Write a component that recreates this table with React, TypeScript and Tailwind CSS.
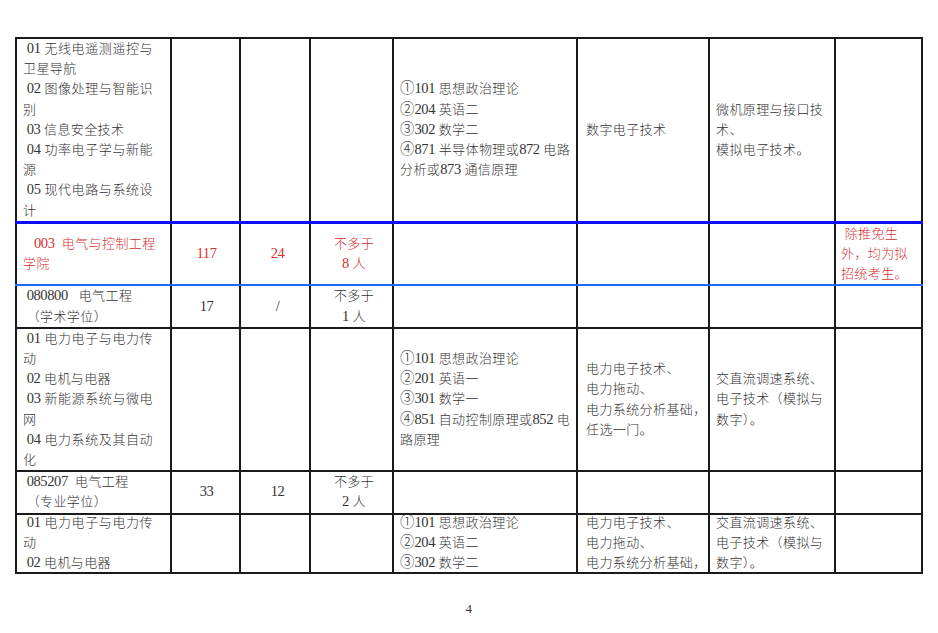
import React from "react";

type Cell = { lines?: string[]; j?: number[] };
type Row = { h: string; red?: boolean; b: string; last?: boolean; cells: Cell[] };

const colCls = [
  "pl-[6px] pr-[17px] text-left",
  "text-center pl-[2px]",
  "text-center pl-[5px]",
  "text-center pl-[5px]",
  "pl-[6px] pr-[7px] text-left",
  "pl-[8px] text-left",
  "pl-[6px] text-left",
  "pl-[5px] text-left",
];

const E: Cell = {};

const rows: Row[] = [
  {
    h: "h-[183.5px]",
    b: "border-b-[3px] border-b-[#0d0df0]",
    cells: [
      {
        lines: [
          " 01 无线电遥测遥控与",
          "卫星导航",
          " 02 图像处理与智能识",
          "别",
          " 03 信息安全技术",
          " 04 功率电子学与新能",
          "源",
          " 05 现代电路与系统设",
          "计",
        ],
        j: [0, 2, 5, 7],
      },
      E,
      E,
      E,
      {
        lines: [
          "①101 思想政治理论",
          "②204 英语二",
          "③302 数学二",
          "④871 半导体物理或872 电路",
          "分析或873 通信原理",
        ],
        j: [3],
      },
      { lines: ["数字电子技术"] },
      { lines: ["微机原理与接口技", "术、", "模拟电子技术。"] },
      E,
    ],
  },
  {
    h: "h-[61.5px]",
    red: true,
    b: "border-t-[3px] border-t-[#0d0df0] border-b-2 border-b-[#1e6cf5]",
    cells: [
      { lines: ["   003  电气与控制工程", "学院"] },
      { lines: ["117"] },
      { lines: ["24"] },
      { lines: ["不多于", "8 人"] },
      E,
      E,
      E,
      { lines: [" 除推免生", "外，均为拟", "招统考生。"] },
    ],
  },
  {
    h: "h-[40.5px]",
    b: "border-t-2 border-t-[#1e6cf5]",
    cells: [
      { lines: [" 080800   电气工程", " （学术学位）"] },
      { lines: ["17"] },
      { lines: ["/"] },
      { lines: ["不多于", "1 人"] },
      E,
      E,
      E,
      E,
    ],
  },
  {
    h: "h-[141px]",
    b: "",
    cells: [
      {
        lines: [
          " 01 电力电子与电力传",
          "动",
          " 02 电机与电器",
          " 03 新能源系统与微电",
          "网",
          " 04 电力系统及其自动",
          "化",
        ],
        j: [0, 3, 5],
      },
      E,
      E,
      E,
      {
        lines: [
          "①101 思想政治理论",
          "②201 英语一",
          "③301 数学一",
          "④851 自动控制原理或852 电",
          "路原理",
        ],
        j: [3],
      },
      { lines: ["电力电子技术、", "电力拖动、", "电力系统分析基础，", "任选一门。"] },
      { lines: ["交直流调速系统、", "电子技术（模拟与", "数字）。"] },
      E,
    ],
  },
  {
    h: "h-[40px]",
    b: "",
    cells: [
      { lines: [" 085207  电气工程", " （专业学位）"] },
      { lines: ["33"] },
      { lines: ["12"] },
      { lines: ["不多于", "2 人"] },
      E,
      E,
      E,
      E,
    ],
  },
  {
    h: "h-[59px]",
    b: "",
    last: true,
    cells: [
      { lines: [" 01 电力电子与电力传", "动", " 02 电机与电器"], j: [0] },
      E,
      E,
      E,
      { lines: ["①101 思想政治理论", "②204 英语二", "③302 数学二"] },
      { lines: ["电力电子技术、", "电力拖动、", "电力系统分析基础，"] },
      { lines: ["交直流调速系统、", "电子技术（模拟与", "数字）。"] },
      E,
    ],
  },
];

function Txt({ s }: { s: string }) {
  const parts = s.replace(/ /g, "\u00a0").split(/([0-9/]+|[\u2460-\u2473])/);
  return (
    <>
      {parts.map((p, i) => {
        if (i % 2 === 1) {
          if (/[\u2460-\u2473]/.test(p)) {
            return (
              <span
                key={i}
                className="font-['Noto_Sans_CJK_SC',sans-serif] text-[14.5px] leading-none tracking-[0px]"
              >
                {p}
              </span>
            );
          }
          return (
            <span key={i} className="text-[14.5px] leading-none tracking-[-0.4px]">
              {p}
            </span>
          );
        }
        return <span key={i}>{p}</span>;
      })}
    </>
  );
}

function Lines({ c, last }: { c: Cell; last?: boolean }) {
  if (!c.lines) return null;
  const j = c.j || [];
  return (
    <div className={last ? "-mt-[2px] -mb-[1px]" : ""}>
      {c.lines.map((l, i) => (
        <div
          key={i}
          className={
            j.includes(i)
              ? "whitespace-nowrap text-justify [text-align-last:justify]"
              : "whitespace-nowrap"
          }
        >
          <Txt s={l} />
        </div>
      ))}
    </div>
  );
}

export default function App() {
  return (
    <div className="w-[938px] h-[633px] bg-white font-['Liberation_Serif','Noto_Sans_CJK_SC',serif] font-light text-[13px] leading-[20.2px] tracking-[0.4px] text-[#333] overflow-hidden">
      <div className="pt-[37px] pl-[15px]">
        <table className="table-fixed border-collapse w-[908px]">
          <colgroup>
            <col className="w-[155px]" />
            <col className="w-[69px]" />
            <col className="w-[70px]" />
            <col className="w-[83px]" />
            <col className="w-[184px]" />
            <col className="w-[132px]" />
            <col className="w-[126px]" />
            <col className="w-[87px]" />
          </colgroup>
          <tbody>
            {rows.map((r, ri) => (
              <tr key={ri} className={r.h}>
                {r.cells.map((c, ci) => (
                  <td
                    key={ci}
                    className={`border-2 border-[#1a1a1a] align-middle py-0 ${colCls[ci]} ${r.b} ${
                      r.red ? "text-[#d42f2f]" : ""
                    }`}
                  >
                    <Lines c={c} last={r.last} />
                  </td>
                ))}
              </tr>
            ))}
          </tbody>
        </table>
      </div>
      <div className="mt-[25px] text-center leading-[20px] text-[13px] text-[#333]">4</div>
    </div>
  );
}
